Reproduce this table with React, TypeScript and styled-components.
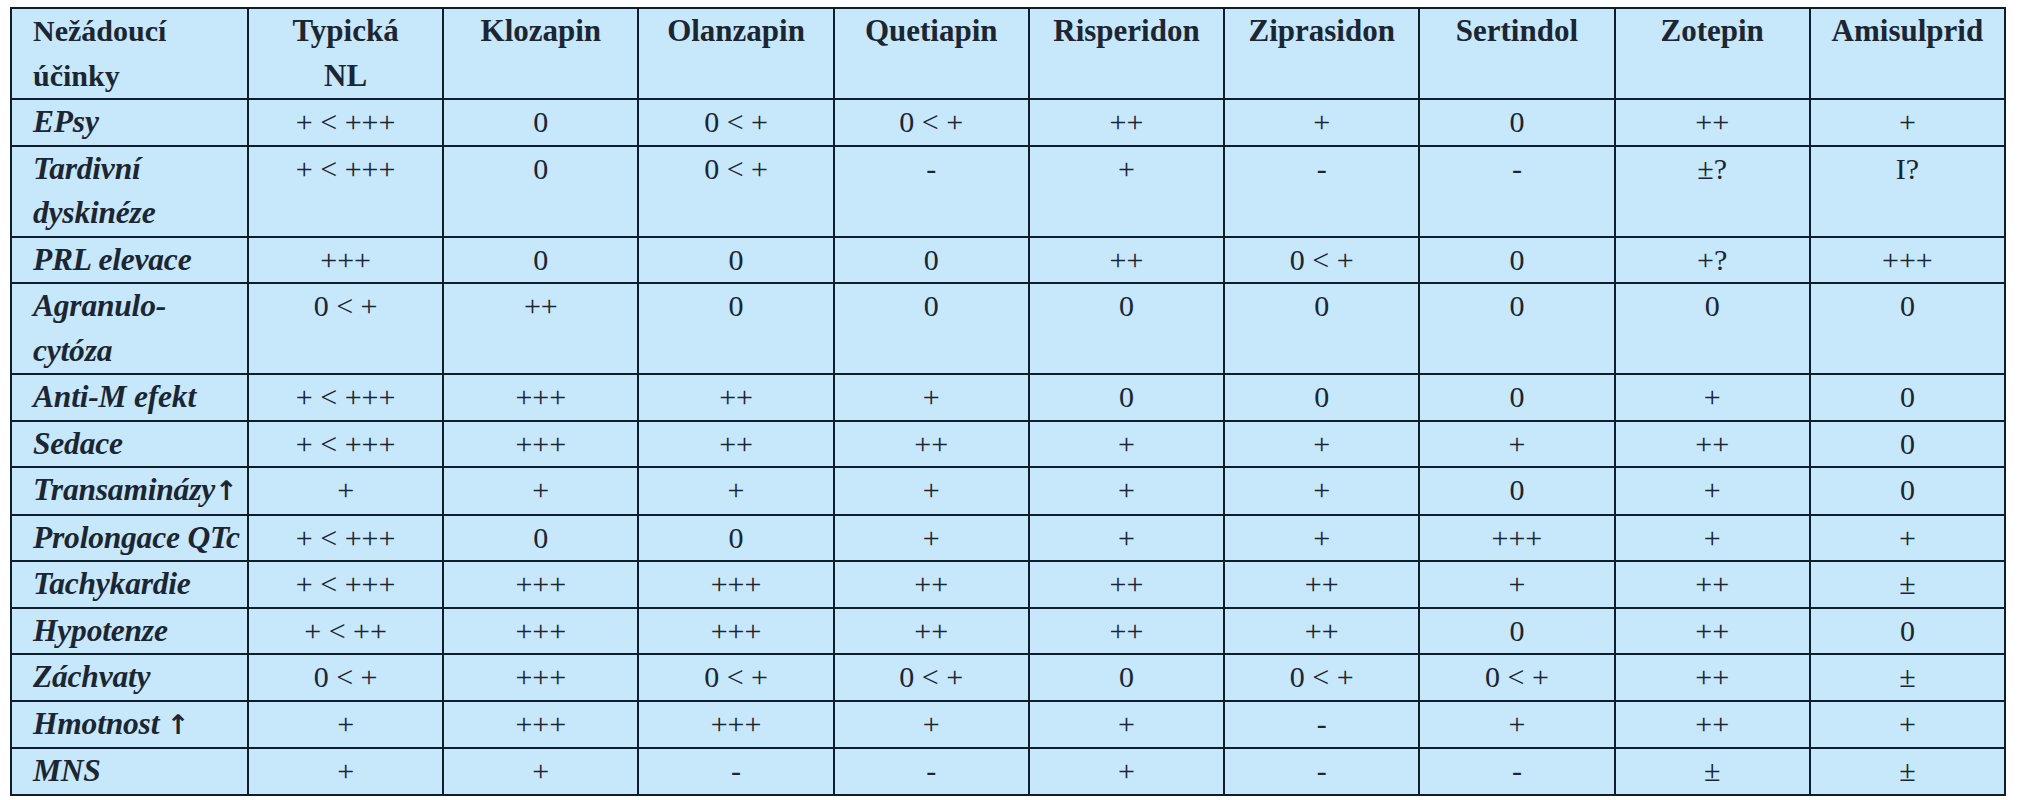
import React from 'react';
import styled, { createGlobalStyle } from 'styled-components';

const GlobalStyle = createGlobalStyle`
  html, body {
    margin: 0;
    padding: 0;
    background: #fff;
  }
`;

const Page = styled.div`
  padding: 7px 0 0 10px;
`;

const Table = styled.table`
  width: 1996px;
  table-layout: fixed;
  border-collapse: collapse;
  background: #c7e7fa;
  color: #1b2632;
  font-family: 'Liberation Serif', serif;
  border: 2px solid #0f1e2b;
`;

const Cell = styled.td`
  border: 2px solid #0f1e2b;
  padding: 0;
  line-height: 44.5px;
  vertical-align: top;
`;

const HeadCell = styled(Cell).attrs({ as: 'th' })<{ $left?: boolean }>`
  font-weight: bold;
  text-align: ${({ $left }) => ($left ? 'left' : 'center')};
  padding-left: ${({ $left }) => ($left ? '21px' : '0')};
  font-size: ${({ $left }) => ($left ? '30px' : '31px')};
  line-height: 44.5px;
`;

const LabelCell = styled(Cell)`
  font-weight: bold;
  font-style: italic;
  padding-left: 21px;
  font-size: 31.5px;
  white-space: nowrap;
  letter-spacing: -0.2px;
`;

const ValueCell = styled(Cell)`
  text-align: center;
  font-size: 30px;
  white-space: pre;
`;

const Arrow = styled.span`
  font-family: 'DejaVu Sans', sans-serif;
  font-style: normal;
  font-weight: bold;
  font-size: 27px;
`;

const columns = [
  'Klozapin',
  'Olanzapin',
  'Quetiapin',
  'Risperidon',
  'Ziprasidon',
  'Sertindol',
  'Zotepin',
  'Amisulprid',
];

type Row = { label: React.ReactNode; values: string[] };

const rows: Row[] = [
  { label: 'EPsy', values: ['+ < +++', '0', '0 < +', '0 < +', '++', '+', '0', '++', '+'] },
  {
    label: (
      <>
        Tardivní
        <br />
        dyskinéze
      </>
    ),
    values: ['+ < +++', '0', '0 < +', '-', '+', '-', '-', '±?', 'I?'],
  },
  { label: 'PRL elevace', values: ['+++', '0', '0', '0', '++', '0 < +', '0', '+?', '+++'] },
  {
    label: (
      <>
        Agranulo-
        <br />
        cytóza
      </>
    ),
    values: ['0 < +', '++', '0', '0', '0', '0', '0', '0', '0'],
  },
  { label: 'Anti-M efekt', values: ['+ < +++', '+++', '++', '+', '0', '0', '0', '+', '0'] },
  { label: 'Sedace', values: ['+ < +++', '+++', '++', '++', '+', '+', '+', '++', '0'] },
  {
    label: (
      <>
        Transaminázy<Arrow>↑</Arrow>
      </>
    ),
    values: ['+', '+', '+', '+', '+', '+', '0', '+', '0'],
  },
  { label: 'Prolongace QTc', values: ['+ < +++', '0', '0', '+', '+', '+', '+++', '+', '+'] },
  { label: 'Tachykardie', values: ['+ < +++', '+++', '+++', '++', '++', '++', '+', '++', '±'] },
  { label: 'Hypotenze', values: ['+ < ++', '+++', '+++', '++', '++', '++', '0', '++', '0'] },
  { label: 'Záchvaty', values: ['0 < +', '+++', '0 < +', '0 < +', '0', '0 < +', '0 < +', '++', '±'] },
  {
    label: (
      <>
        Hmotnost <Arrow>↑</Arrow>
      </>
    ),
    values: ['+', '+++', '+++', '+', '+', '-', '+', '++', '+'],
  },
  { label: 'MNS', values: ['+', '+', '-', '-', '+', '-', '-', '±', '±'] },
];

const App = () => {
  return (
    <>
      <GlobalStyle />
      <Page>
        <Table>
          <colgroup>
            <col style={{ width: '237px' }} />
            {[...Array(9)].map((_, i) => (
              <col key={i} />
            ))}
          </colgroup>
          <thead>
            <tr>
              <HeadCell $left>
                Nežádoucí
                <br />
                účinky
              </HeadCell>
              <HeadCell>
                Typická
                <br />
                NL
              </HeadCell>
              {columns.map((c) => (
                <HeadCell key={c}>{c}</HeadCell>
              ))}
            </tr>
          </thead>
          <tbody>
            {rows.map((r, i) => (
              <tr key={i}>
                <LabelCell>{r.label}</LabelCell>
                {r.values.map((v, j) => (
                  <ValueCell key={j}>{v}</ValueCell>
                ))}
              </tr>
            ))}
          </tbody>
        </Table>
      </Page>
    </>
  );
};

export default App;
